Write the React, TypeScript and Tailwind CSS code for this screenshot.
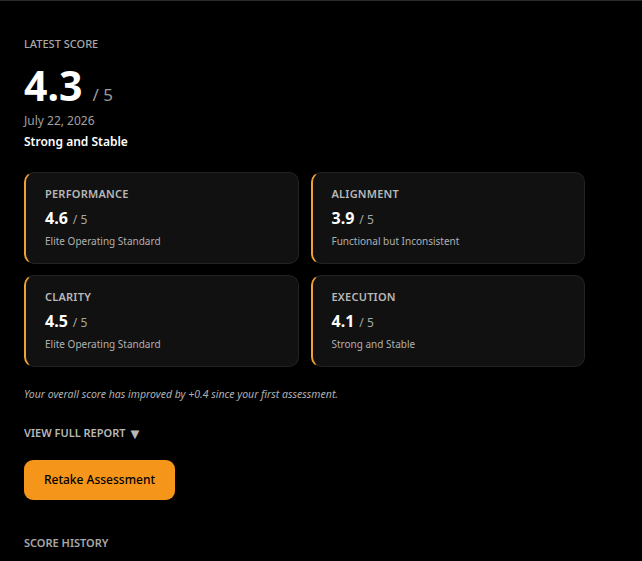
const metrics = [
  { label: 'Performance', score: '4.6', note: 'Elite Operating Standard' },
  { label: 'Alignment', score: '3.9', note: 'Functional but Inconsistent' },
  { label: 'Clarity', score: '4.5', note: 'Elite Operating Standard' },
  { label: 'Execution', score: '4.1', note: 'Strong and Stable' },
]

function MetricCard({ label, score, note }: { label: string; score: string; note: string }) {
  return (
    <div className="h-[92px] rounded-[10px] border border-[#232323] border-l-2 border-l-[#f0a035] bg-[#111111] px-[19px] pt-[13px]">
      <p className="text-[11px] font-semibold uppercase tracking-[0.02em] text-[#b8b8b8]">{label}</p>
      <p className="mt-[4px] flex items-baseline gap-[5px]">
        <span className="text-[16px] font-bold text-white">{score}</span>
        <span className="text-[12px] text-[#a8a8a8]">/ 5</span>
      </p>
      <p className="mt-[4px] text-[10px] text-[#b0b0b0]">{note}</p>
    </div>
  )
}

export default function App() {
  return (
    <div
      className="min-h-[561px] border-t border-[#2a2a2a] bg-black px-6 pt-[35px] text-white"
      style={{ fontFamily: '"Noto Sans", sans-serif' }}
    >
      {/* Headline score */}
      <p className="text-[11px] font-medium uppercase text-[#a8a8a8]">Latest Score</p>
      <div className="mt-[9px] flex items-baseline gap-[10px]">
        <span className="text-[41px] font-bold leading-[46px]">4.3</span>
        <span className="text-[17px] text-[#9a9a9a]">/ 5</span>
      </div>
      <p className="mt-[4px] text-[12px] text-[#a0a0a0]">July 22, 2026</p>
      <p className="mt-[3px] text-[12px] font-semibold">Strong and Stable</p>

      {/* Category breakdown */}
      <div className="mt-[21px] grid w-[561px] grid-cols-2 gap-x-3 gap-y-[11px]">
        {metrics.map((m) => (
          <MetricCard key={m.label} {...m} />
        ))}
      </div>

      <p className="mt-[20px] text-[10.5px] italic text-[#b0b0b0]">
        Your overall score has improved by +0.4 since your first assessment.
      </p>

      <button className="mt-[23px] flex items-center gap-[2px] text-[11px] font-semibold uppercase text-[#b8b8b8]">
        View Full Report <span className="text-[15px] leading-none">▼</span>
      </button>

      <button className="mt-[18px] h-[40px] w-[151px] rounded-[9px] bg-[#f5961a] text-[12px] font-medium text-black">
        Retake Assessment
      </button>

      <p className="mt-[35px] text-[11px] font-semibold uppercase text-[#a8a8a8]">Score History</p>
    </div>
  )
}
